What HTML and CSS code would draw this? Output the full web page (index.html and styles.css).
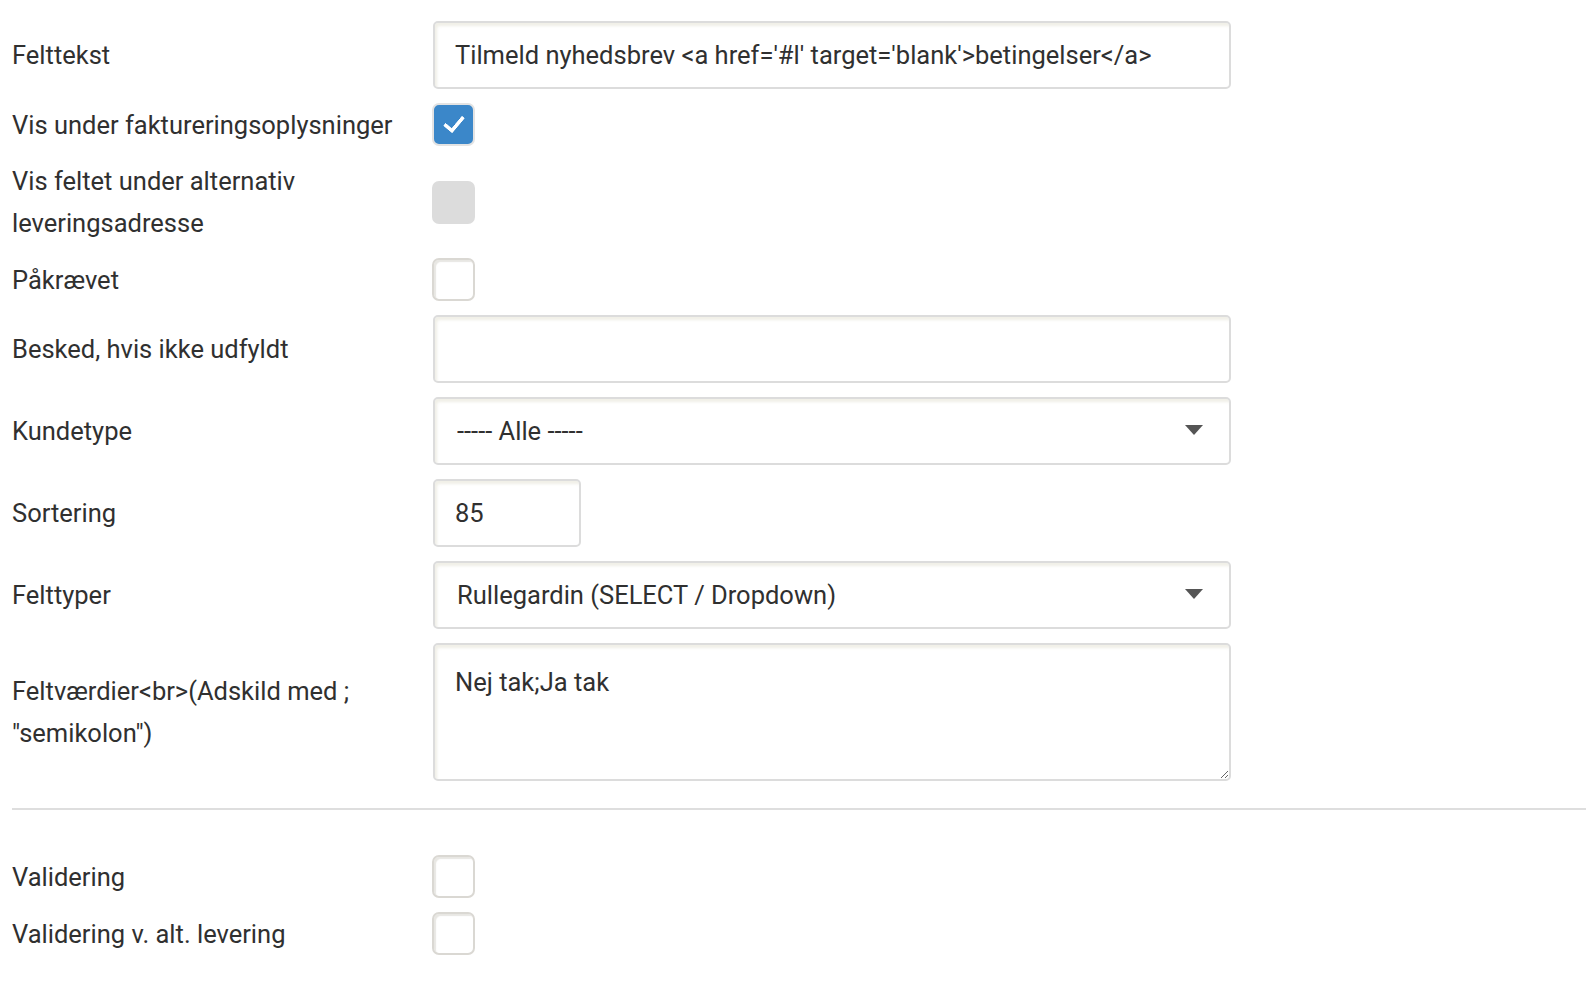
FILE: index.html
```html
<!DOCTYPE html>
<html>
  <head>
    <title>Felt</title>
    <meta charset="utf-8" />
    <link rel="stylesheet" href="styles.css">
  </head>
  <body>
    <form class="field-form">
      <div class="row">
        <label class="row-label" for="felttekst">Felttekst</label>
        <div class="row-control">
          <input type="text" id="felttekst" class="text-input" value="Tilmeld nyhedsbrev <a href='#l' target='blank'>betingelser</a>" />
        </div>
      </div>

      <div class="row">
        <label class="row-label" for="vis-faktura">Vis under faktureringsoplysninger</label>
        <div class="row-control">
          <input type="checkbox" id="vis-faktura" class="check" checked />
        </div>
      </div>

      <div class="row">
        <label class="row-label" for="vis-levering">Vis feltet under alternativ<br>leveringsadresse</label>
        <div class="row-control">
          <input type="checkbox" id="vis-levering" class="check" disabled />
        </div>
      </div>

      <div class="row">
        <label class="row-label" for="paakraevet">Påkrævet</label>
        <div class="row-control">
          <input type="checkbox" id="paakraevet" class="check" />
        </div>
      </div>

      <div class="row">
        <label class="row-label" for="besked">Besked, hvis ikke udfyldt</label>
        <div class="row-control">
          <input type="text" id="besked" class="text-input" />
        </div>
      </div>

      <div class="row">
        <label class="row-label" for="kundetype">Kundetype</label>
        <div class="row-control">
          <div class="select-wrap">
            <select id="kundetype" class="select">
              <option>----- Alle -----</option>
            </select>
            <svg class="caret" width="18" height="10" viewBox="0 0 18 10"><path d="M0 0h18L9 10z" fill="#555"/></svg>
          </div>
        </div>
      </div>

      <div class="row">
        <label class="row-label" for="sortering">Sortering</label>
        <div class="row-control">
          <input type="text" id="sortering" class="text-input short" value="85" />
        </div>
      </div>

      <div class="row">
        <label class="row-label" for="felttyper">Felttyper</label>
        <div class="row-control">
          <div class="select-wrap">
            <select id="felttyper" class="select">
              <option>Rullegardin (SELECT / Dropdown)</option>
            </select>
            <svg class="caret" width="18" height="10" viewBox="0 0 18 10"><path d="M0 0h18L9 10z" fill="#555"/></svg>
          </div>
        </div>
      </div>

      <div class="row">
        <label class="row-label" for="feltvaerdier">Feltværdier&lt;br&gt;(Adskild med ;<br>"semikolon")</label>
        <div class="row-control">
          <textarea id="feltvaerdier" class="text-area">Nej tak;Ja tak</textarea>
        </div>
      </div>

      <hr class="divider" />

      <div class="row">
        <label class="row-label" for="validering">Validering</label>
        <div class="row-control">
          <input type="checkbox" id="validering" class="check" />
        </div>
      </div>

      <div class="row">
        <label class="row-label" for="validering-alt">Validering v. alt. levering</label>
        <div class="row-control">
          <input type="checkbox" id="validering-alt" class="check" />
        </div>
      </div>
    </form>
  </body>
</html>
```

FILE: styles.css
```css
:root {
  --text: #303030;
  --border: #dcdcdc;
  --gap: 14px;
}

* {
  box-sizing: border-box;
}

body {
  margin: 0;
  padding: 21px 0 0 12px;
  font-family: Roboto, "Liberation Sans", sans-serif;
  font-size: 25.5px;
  color: var(--text);
  background: #fff;
}

.field-form {
  display: flex;
  flex-direction: column;
  gap: var(--gap);
}

.row {
  display: flex;
  align-items: center;
  min-height: 43px;
}

.row-label {
  width: 421px;
  flex: none;
  line-height: 42px;
}

.row-control {
  width: 798px;
  flex: none;
  display: flex;
  align-items: center;
}

.text-input,
.select,
.text-area {
  width: 100%;
  height: 68px;
  padding: 0 20px;
  font-family: inherit;
  font-size: 25.5px;
  color: var(--text);
  border: 2px solid var(--border);
  border-radius: 5px;
  background: #fff;
  box-shadow: inset 2px 3px 3px rgba(200, 196, 170, 0.28);
  outline: none;
}

.text-input.short {
  width: 148px;
}

.select-wrap {
  position: relative;
  width: 100%;
}

.select {
  appearance: none;
  -webkit-appearance: none;
  padding-left: 22px;
}

.caret {
  position: absolute;
  right: 28px;
  top: 28px;
  pointer-events: none;
}

.text-area {
  height: 138px;
  padding: 20px 20px;
  line-height: 34px;
  resize: vertical;
}

.check {
  appearance: none;
  -webkit-appearance: none;
  width: 43px;
  height: 43px;
  margin: 0 0 0 -1px;
  border: 2px solid #dad8d3;
  border-radius: 7px;
  background: #fff;
  box-shadow: inset 2px 2px 1px rgba(190, 185, 175, 0.35);
  position: relative;
}

.check:checked {
  background: #3b87c9;
  border-color: #e3e3e3;
  box-shadow: none;
}

.check:checked::after {
  content: "";
  position: absolute;
  left: 14px;
  top: 7px;
  width: 8px;
  height: 16px;
  border: solid #fff;
  border-width: 0 4px 4px 0;
  border-radius: 1px;
  transform: rotate(40deg);
}

.check:disabled {
  background: #dcdcdc;
  border-color: #dcdcdc;
  box-shadow: none;
}

.divider {
  border: 0;
  border-top: 2px solid #dedede;
  margin: 13px 0 31px 0;
}
```
